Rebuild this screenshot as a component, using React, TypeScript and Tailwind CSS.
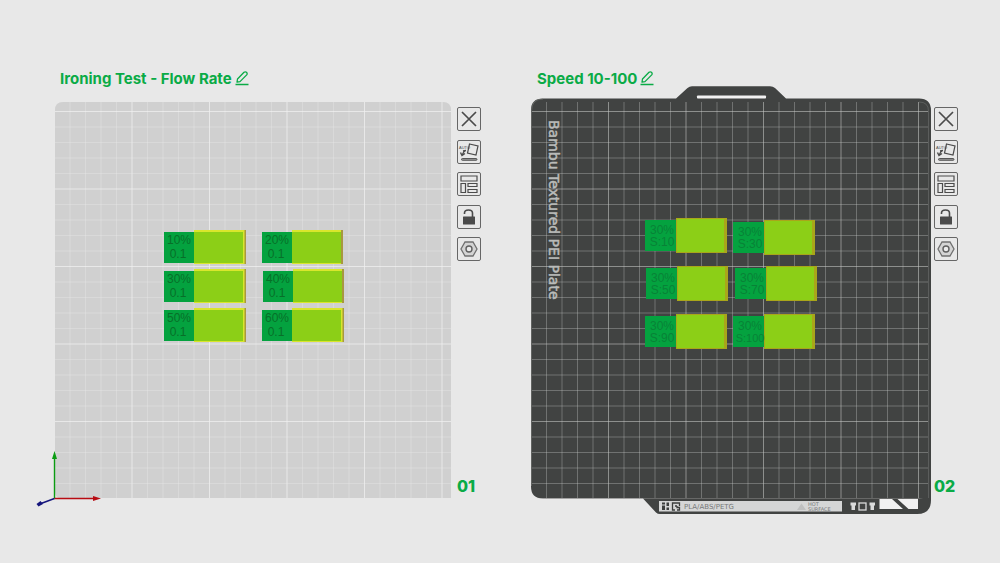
import type { ReactNode } from 'react';

interface Model {
  x: number;
  y: number;
  top: string;
  bottom: string;
  edge?: boolean;
}

const STEP = 15.5;

const flowModels: Model[] = [
  { x: 164, y: 231, top: '10%', bottom: '0.1', edge: true },
  { x: 262, y: 231, top: '20%', bottom: '0.1' },
  { x: 164, y: 270, top: '30%', bottom: '0.1', edge: true },
  { x: 263, y: 270, top: '40%', bottom: '0.1' },
  { x: 164, y: 309, top: '50%', bottom: '0.1', edge: true },
  { x: 262, y: 309, top: '60%', bottom: '0.1', edge: true },
];

const speedModels: Model[] = [
  { x: 645, y: 220, top: '30%', bottom: 'S:10' },
  { x: 733, y: 222, top: '30%', bottom: 'S:30' },
  { x: 646, y: 268, top: '30%', bottom: 'S:50' },
  { x: 735, y: 268, top: '30%', bottom: 'S:70' },
  { x: 645, y: 316, top: '30%', bottom: 'S:90' },
  { x: 733, y: 316, top: '30%', bottom: 'S:100' },
];

function Grid({ left, right, firstX, stroke, minor, major }: {
  left: number;
  right: number;
  firstX: number;
  stroke: string;
  minor: number;
  major: number;
}) {
  const columns = Array.from({ length: 25 }, (_, i) => i);
  const rows = Array.from({ length: 26 }, (_, i) => i);
  return (
    <g stroke={stroke}>
      {columns.map(i => (
        <line
          key={`c${i}`}
          x1={firstX + i * STEP}
          x2={firstX + i * STEP}
          y1={102}
          y2={498}
          strokeOpacity={i % 5 === 4 ? major : minor}
        />
      ))}
      {rows.map(i => (
        <line
          key={`r${i}`}
          x1={left}
          x2={right}
          y1={111.5 + i * STEP}
          y2={111.5 + i * STEP}
          strokeOpacity={i % 5 === 0 ? major : minor}
        />
      ))}
    </g>
  );
}

function FlowPlate() {
  return (
    <svg viewBox="31 86 424 430" className="block h-auto w-full" role="img" aria-label="Plate 01">
      <defs>
        <clipPath id="flow-plate">
          <path d="M55 110 Q55 102 63 102 H443 Q451 102 451 110 V498 H61 Q55 498 55 492 Z" />
        </clipPath>
      </defs>
      <g clipPath="url(#flow-plate)">
        <rect x="55" y="102" width="396" height="396" fill="#d0d0d0" />
        <Grid left={55} right={451} firstX={70} stroke="#f0f0f0" minor={0.3} major={0.75} />
      </g>
      {flowModels.map(m => (
        <g key={m.top}>
          <rect x={m.x + 79} y={m.y - 1} width={m.edge ? 3 : 2} height="34" fill="#a8983f" />
          <rect x={m.x} y={m.y + 1} width="30" height="31" fill="#04a23f" />
          <rect x={m.x + 30} y={m.y - 1} width={m.edge ? 50.5 : 49} height="34" fill="#d9e62c" />
          <rect x={m.x + 30} y={m.y + 1} width="49" height="31" fill="#8ccf17" />
          <g fill="#077029" fontFamily="'Liberation Sans', Arial, sans-serif" fontSize="12" textAnchor="middle">
            <text x={m.x + 15} y={m.y + 13}>{m.top}</text>
            <text x={m.x + 14} y={m.y + 27}>{m.bottom}</text>
          </g>
        </g>
      ))}
      {/* Axes */}
      <g strokeWidth="1.4">
        <path d="M54.5 498.5 V458" stroke="#0b9c12" />
        <path d="M54.5 498.5 H94" stroke="#b80b12" />
        <path d="M54.5 498.5 L41 503.5" stroke="#15157c" />
      </g>
      <path d="M54.5 451 L57 459 H52 Z" fill="#0b9c12" />
      <path d="M101 498.5 L93 501 V496 Z" fill="#b80b12" />
      <path d="M36.5 504 L40.5 501 L43 504 L38.5 506.5 Z" fill="#15157c" />
    </svg>
  );
}

function SpeedPlate() {
  return (
    <svg viewBox="508 86 424 430" className="block h-auto w-full" role="img" aria-label="Plate 02">
      {/* Plate body with the handle on top and the label lip below */}
      <path
        d="M531 110 Q531 98.5 543 98.5 H676 L687.5 88 Q689.5 86.3 692 86.3 H770 Q773 86.3 775 88 L786 98.5 H919 Q931 98.5 931 110.5 V500 Q931 514 917 514 H660 Q657.5 514 656 512.5 L643 498.5 H543 Q531 498.5 531 486.5 Z"
        fill="#414342"
      />
      <rect x="697" y="95.5" width="69" height="3" rx="0.8" fill="#f2f2f2" />
      <clipPath id="speed-plate">
        <rect x="532" y="102" width="396" height="397" rx="9" />
      </clipPath>
      <g clipPath="url(#speed-plate)">
        <Grid left={532} right={928} firstX={546.5} stroke="#c4c7c5" minor={0.36} major={0.58} />
      </g>
      <path d="M531.5 486 V111 Q531.5 99 543 99" fill="none" stroke="#777977" strokeOpacity="0.6" />
      <path d="M928.5 498 V111 Q928.5 102 919 102" fill="none" stroke="#6d706e" strokeOpacity="0.6" />

      <text
        transform="translate(549 120) rotate(90)"
        fill="#b9bbb9"
        stroke="#b9bbb9"
        strokeWidth="0.5"
        fontFamily="'DejaVu Sans', Verdana, sans-serif"
        fontSize="14"
      >
        Bambu Textured PEI Plate
      </text>

      {speedModels.map(m => (
        <g key={m.bottom}>
          <rect x={m.x} y={m.y} width="31" height="31" fill="#04a23f" />
          <rect x={m.x + 31} y={m.y - 2} width="51" height="35" fill="#a9a61a" />
          <rect x={m.x + 32} y={m.y - 1} width="47" height="33" fill="#8ccf17" />
          <g fill="#088237" fontFamily="'Liberation Sans', Arial, sans-serif" fontSize="12" textAnchor="middle">
            <text x={m.x + 17} y={m.y + 14}>{m.top}</text>
            <text x={m.x + 17} y={m.y + 26} fontSize={m.bottom.length > 4 ? 11 : 12}>{m.bottom}</text>
          </g>
        </g>
      ))}

      {/* Material label */}
      <rect x="659" y="501" width="183" height="10.5" fill="#d5d6d6" />
      <g fill="#3d3f3e">
        <path d="M662 502.5h3v2h-3zM666.5 502.5h2.5v3.5h-2.5zM662 505.5h3v4.5h-3zM666.5 507.5h2.5v2.5h-2.5z" />
        <path d="M679.5 506 V503 H672.5 V510 H675 M675 506 H677 M677 506 V507.5 H679.5 V510 H677" fill="none" stroke="#3d3f3e" strokeWidth="1.3" />
      </g>
      <g fontFamily="'DejaVu Sans', Verdana, sans-serif" fill="#77797a">
        <text x="684" y="509" fontSize="7">PLA/ABS/PETG</text>
        <text x="808" y="506" fontSize="5">HOT</text>
        <text x="808" y="510.5" fontSize="5">SURFACE</text>
      </g>
      <path d="M801.5 503.5 L806 510 H797 Z" fill="#bfc0c0" />
      <g fill="#dadbdb">
        <path d="M850.5 502.5h5.500v3h-1v4.500h-3.500v-4.500h-1zM869.500 502.500h5.500v3h-1v4.500h-3.500v-4.500h-1z" />
        <rect x="859" y="503" width="7" height="7" fill="none" stroke="#dadbdb" strokeWidth="1.3" />
      </g>
      <path d="M879.5 499 H892 L903 509 H879.5 Z M897.5 499 H918 V509 H908.5 Z" fill="#f1f1f1" />
    </svg>
  );
}

function ToolButton({ label, children }: { label: string; children: ReactNode }) {
  return (
    <button
      type="button"
      aria-label={label}
      className="flex size-6 items-center justify-center rounded-xs border border-[#666666] text-[#4b4b4b] hover:bg-white"
    >
      <svg viewBox="0 0 22 22" className="size-[22px] shrink-0" fill="none" stroke="currentColor">
        {children}
      </svg>
    </button>
  );
}

function PlateTools() {
  return (
    <div className="flex h-[154px] flex-col justify-between">
      <ToolButton label="Delete plate">
        <path d="M4 4 L18 18 M18 4 L4 18" strokeWidth="1.7" />
      </ToolButton>
      <ToolButton label="Auto orient">
        <path d="M11.5 3 L20 5 L18 14 L9.5 12 Z" strokeWidth="1.2" />
        <rect x="3.500" y="17.500" width="15.500" height="1.800" rx="0.900" fill="#999" strokeWidth="0.900" />
        <path d="M7.500 9.500 Q5 11 4 14.500 M2.500 11.500 L4 14.500 L7 12.500 M5 10 L8 9.500" strokeWidth="1.400" />
        <text x="1" y="8" fontSize="4" fill="currentColor" stroke="none" fontFamily="'Liberation Sans', Arial, sans-serif">AUTO</text>
      </ToolButton>
      <ToolButton label="Arrange plate">
        <path d="M3 3 H19 V8 H3 Z M3 10.500 H7.500 V19.500 H3 Z M10 10.500 H19 V13.500 H10 Z M10 16.500 H19 V19.500 H10 Z" strokeWidth="1.200" />
      </ToolButton>
      <ToolButton label="Lock plate">
        <path d="M6.500 8 V7 Q6.500 4 10.500 4 Q14.500 4 14.500 7 V11" strokeWidth="1.600" />
        <rect x="5" y="10.500" width="12" height="8" rx="0.500" fill="currentColor" stroke="none" />
      </ToolButton>
      <ToolButton label="Plate settings">
        <path d="M7 4 H15 L19 11 L15 18 H7 L3 11 Z" fill="#d4d4d4" stroke="#707070" strokeWidth="1.300" />
        <circle cx="11" cy="11" r="3" fill="#ebebeb" stroke="#606060" strokeWidth="1.400" />
      </ToolButton>
    </div>
  );
}

function PlateView({ title, number, children }: { title: string; number: string; children: ReactNode }) {
  return (
    <section className="min-w-0">
      <div className="flex h-[14px] items-center gap-0.5 pl-[29px] text-[#0aab46]">
        <h2 className="text-[15px] leading-[14px] font-bold whitespace-nowrap">{title}</h2>
        <button type="button" aria-label={`Rename ${title}`} className="shrink-0">
          <svg viewBox="0 0 16 16" className="size-4" fill="none" stroke="currentColor" strokeWidth="1.300">
            <path d="M3 11.200 L3.500 8 L10 1.300 Q11.300 0.300 12.500 1.300 Q13.700 2.600 12.700 3.900 L6 10.600 Z" strokeLinejoin="round" />
            <path d="M1.500 13.500 H14.500" strokeWidth="1.500" />
          </svg>
        </button>
      </div>
      <div className="flex gap-0.5">
        <div className="min-w-0 flex-1">{children}</div>
        <div className="flex w-6 shrink-0 flex-col justify-between pt-[21px] pb-[22px]">
          <PlateTools />
          <span className="text-base leading-4 font-extrabold text-[#0aab46]">{number}</span>
        </div>
      </div>
    </section>
  );
}

export default function App() {
  return (
    <main className="min-h-screen bg-[#e8e8e8] pt-[72px] pr-[42px] pb-10 pl-[31px] font-['Inter','Liberation_Sans',sans-serif]">
      <div className="grid grid-cols-2 gap-[27px]">
        <PlateView title="Ironing Test - Flow Rate" number="01">
          <FlowPlate />
        </PlateView>
        <PlateView title="Speed 10-100" number="02">
          <SpeedPlate />
        </PlateView>
      </div>
    </main>
  );
}
